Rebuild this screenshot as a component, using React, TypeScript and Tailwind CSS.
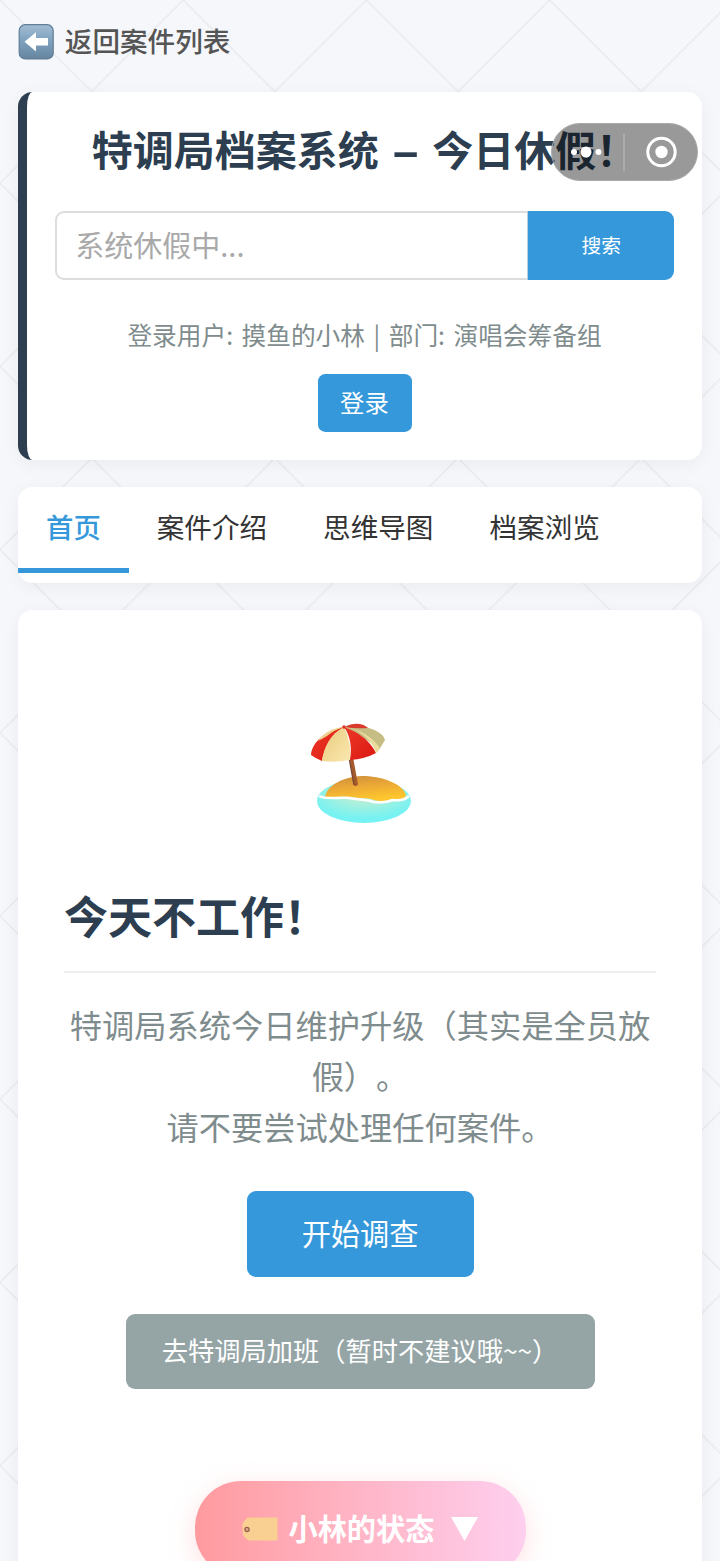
import React, { useState } from 'react';

const tabs = ['首页', '案件介绍', '思维导图', '档案浏览'];

const Backdrop: React.FC = () => (
  <svg className="absolute inset-0 w-full h-full" aria-hidden="true">
    <defs>
      <pattern id="lattice" width="183.2" height="183.2" patternUnits="userSpaceOnUse">
        <path d="M0 0L183.2 183.2M183.2 0L0 183.2" stroke="#ebecef" strokeWidth="1.7" fill="none" />
      </pattern>
    </defs>
    <rect width="100%" height="100%" fill="url(#lattice)" />
  </svg>
);

const BackIcon: React.FC = () => (
  <svg className="mt-px" width="36" height="36" viewBox="0 0 36 36">
    <defs>
      <linearGradient id="key" x1="0" y1="0" x2="0" y2="1">
        <stop offset="0" stopColor="#a3bdd3" />
        <stop offset="0.45" stopColor="#7fa2c0" />
        <stop offset="1" stopColor="#65859f" />
      </linearGradient>
    </defs>
    <rect x="1.2" y="0.7" width="34" height="34.2" rx="6" fill="url(#key)" stroke="#607d96" strokeWidth="1.2" />
    <path d="M6.5 17.8L18 8.2V14H30V21.5H18V27.4Z" fill="#fff" />
  </svg>
);

const BeachIcon: React.FC = () => (
  <svg width="110" height="110" viewBox="0 0 110 110">
    <defs>
      <linearGradient id="sand" x1="0" y1="0" x2="0.3" y2="1">
        <stop offset="0" stopColor="#c98c3b" />
        <stop offset="0.45" stopColor="#e9a637" />
        <stop offset="1" stopColor="#ffc62e" />
      </linearGradient>
      <radialGradient id="sea" cx="0.5" cy="0.3" r="0.6">
        <stop offset="0" stopColor="#d8edc4" />
        <stop offset="0.5" stopColor="#a5f0df" />
        <stop offset="1" stopColor="#76f2f2" />
      </radialGradient>
      <linearGradient id="cream" x1="0" y1="0" x2="1" y2="1">
        <stop offset="0" stopColor="#e8ca7c" />
        <stop offset="1" stopColor="#fbe9b1" />
      </linearGradient>
      <linearGradient id="red" x1="0" y1="0" x2="1" y2="1">
        <stop offset="0" stopColor="#ec3a28" />
        <stop offset="1" stopColor="#db1712" />
      </linearGradient>
    </defs>
    <ellipse cx="59" cy="81" rx="47" ry="22" fill="url(#sea)" />
    <path d="M20 77C23 63 42 56 60 56C81 57 98 65 101 75C100 80 94 80 88 79C81 81 77 82 69 80C61 77 53 79 45 77C36 76 27 78 20 77Z" fill="url(#sand)" />
    <path d="M14 76C21 80 34 77 44 78C53 80 61 79 69 82C77 83 83 82 88 80C96 81 101 79 104 76" fill="none" stroke="#fff" strokeWidth="2.5" />
    <path d="M44.5 38L48 37L53 64.5Q51 67 49 65.5Z" fill="#a65b2d" />
    <path d="M44.5 40L49 65" stroke="#7c4635" strokeWidth="1.4" />
    <path d="M39 7C54 3 78 10 80 20L74 30Q58 15 39 7Z" fill="#c5bd83" />
    <path d="M40 7C48 2 58 3 63 8Q50 9 40 7Z" fill="#d93a2b" />
    <path d="M39 7C20 11 7 22 6 35Q10 38 17 41Q20 20 39 7Z" fill="url(#red)" />
    <path d="M16 17Q25 8 39 7Q29 10 22 16Q17 19 13 21Z" fill="#ecd28b" />
    <path d="M39 7C25 14 19 27 17 41Q30 43 45 40Q47 24 39 7Z" fill="url(#cream)" />
    <path d="M39 7C46 17 47 29 45 40Q60 39 71 33Q62 15 39 7Z" fill="url(#red)" />
    <path d="M39 7C55 9 67 20 71 33Q74 31 75 28Q62 10 39 7Z" fill="#eadc9c" />
    <circle cx="39" cy="7" r="1.7" fill="#df2d22" />
  </svg>
);

const TagIcon: React.FC = () => (
  <svg className="mt-px" width="37" height="24" viewBox="0 0 37 24">
    <path d="M7 .5H36.500V23.500H8Q6 23 2 18Q1.500 17 1.500 8Q1.500 5 7 .5Z" fill="#f9cf92" />
    <circle cx="6" cy="12.500" r="2.100" fill="#dfa786" stroke="#985f4f" strokeWidth="1.300" />
  </svg>
);

// floating host-app menu, sits over the header card
const Capsule: React.FC = () => (
  <div className="absolute left-[551px] top-[123px] z-10 flex h-[58px] w-[147px] items-center rounded-full border border-[#aaa] bg-black/40">
    <svg width="145" height="56" viewBox="0 0 145 56" fill="#fff">
      <circle cx="22" cy="28" r="3" />
      <circle cx="34" cy="28" r="5.500" />
      <circle cx="46.500" cy="28" r="3" />
      <path d="M72 9.500V47" stroke="#b5b5b5" strokeWidth="1.300" />
      <circle cx="109.500" cy="28" r="13.700" fill="none" stroke="#fff" strokeWidth="3" />
      <circle cx="109.500" cy="28" r="6.200" />
    </svg>
  </div>
);

const App: React.FC = () => {
  const [active, setActive] = useState(tabs[0]);
  const [query, setQuery] = useState('');

  return (
    <div className="relative h-[1561px] w-[720px] overflow-hidden bg-[#f5f7fa] font-['Noto_Sans_CJK_SC',sans-serif] [text-spacing-trim:space-all]">
      <Backdrop />
      <Capsule />
      <div className="relative flex flex-col px-[18.3px]">
        <a className="flex h-[91.6px] items-center gap-[10.500px] pb-[9px] text-[27.600px] font-medium text-[#555]">
          <BackIcon />
          <span className="-mt-px">返回案件列表</span>
        </a>

        <header className="flex h-[368px] flex-col items-center rounded-[14.600px] border-l-[9.200px] border-[#2c3e50] bg-white px-[27.500px] pt-[27.500px] shadow-[0_4px_18px_rgba(0,0,0,0.05)]">
          <h1 className="flex h-[64px] items-center pb-[5px] whitespace-pre text-[41px] font-bold text-[#2c3e50]">
            特调局档案系统<span className="w-[53.500px] pb-[3px] text-center text-[50px] leading-none">–</span>今日休假！
          </h1>
          <div className="mt-[27.700px] flex h-[69.500px] w-full shrink-0">
            <input
              value={query}
              onChange={e => setQuery(e.target.value)}
              placeholder="系统休假中..."
              className="min-w-0 flex-1 rounded-l-[9px] border-2 border-r-0 border-[#ddd] px-[18.500px] pb-[1px] text-[29px] text-gray-700 placeholder:text-[#a9a9a9] focus:outline-none"
            />
            <button className="w-[147px] rounded-r-[9px] border-l border-[#b9cfdf] bg-[#3498db] pb-[1px] text-[19.800px] text-white">搜索</button>
          </div>
          <p className="mt-[35px] h-[40px] whitespace-nowrap text-[24.700px] leading-[39px] [word-spacing:3px] text-[#7f8c8d]">
            登录用户: 摸鱼的小林 | 部门: 演唱会筹备组
          </p>
          <button className="mt-[18.500px] h-[58.500px] w-[94px] shrink-0 rounded-[7.300px] bg-[#3498db] pb-[1px] text-[24.400px] text-white">登录</button>
        </header>

        <nav className="mt-[27.500px] flex h-[96px] items-start rounded-[14.600px] bg-white shadow-[0_4px_18px_rgba(0,0,0,0.05)]">
          {tabs.map(tab => (
            <button
              key={tab}
              onClick={() => setActive(tab)}
              className={
                tab === active
                  ? 'h-[86px] border-b-[5.500px] border-[#3498db] px-[27.800px] pb-[4px] text-[27.400px] leading-[76px] font-medium text-[#3498db]'
                  : 'h-[86px] border-b-[5.500px] border-transparent px-[28px] pb-[4px] text-[27.600px] leading-[76px] text-[#333]'
              }
            >
              {tab}
            </button>
          ))}
        </nav>

        <main className="mt-[27.200px] flex h-[1100px] flex-col items-center rounded-[14.600px] bg-white px-[45.800px] pt-[110px] shadow-[0_4px_18px_rgba(0,0,0,0.05)]">
          <BeachIcon />
          <h2 className="mt-[48.500px] h-[94px] w-full border-b-2 border-[#eee] text-[44px] leading-[72px] font-bold text-[#2c3e50]">
            今天不工作！
          </h2>
          <p className="mt-[26px] text-center text-[32.250px] leading-[51.300px] text-[#7f8c8d]">
            特调局系统今日维护升级（其实是全员放假）。
            <br />
            请不要尝试处理任何案件。
          </p>
          <button className="mt-[38.500px] h-[86px] w-[227px] shrink-0 rounded-[9px] bg-[#3498db] pb-[3px] text-[29.200px] text-white">
            开始调查
          </button>
          <button className="mt-[37px] h-[75px] w-[469px] shrink-0 rounded-[9px] bg-[#95a5a6] pb-[1px] text-[26.250px] text-white">
            去特调局加班（暂时不建议哦~~）
          </button>
          <button className="mt-[91.500px] flex h-[96px] w-[331px] shrink-0 items-center rounded-[46px] bg-linear-to-r from-[#ff9a9e] to-[#fecfef] pl-[46px] text-[29.200px] font-bold text-white shadow-[0_7px_27px_rgba(255,154,158,0.3)]">
            <TagIcon />
            <span className="-mt-[2px] ml-[11px]">小林的状态</span>
            <svg className="mt-px ml-[17px]" width="27" height="24" viewBox="0 0 27 24">
              <path d="M0 0H27L13.500 24Z" fill="#fff" />
            </svg>
          </button>
        </main>
      </div>
    </div>
  );
};

export default App;
